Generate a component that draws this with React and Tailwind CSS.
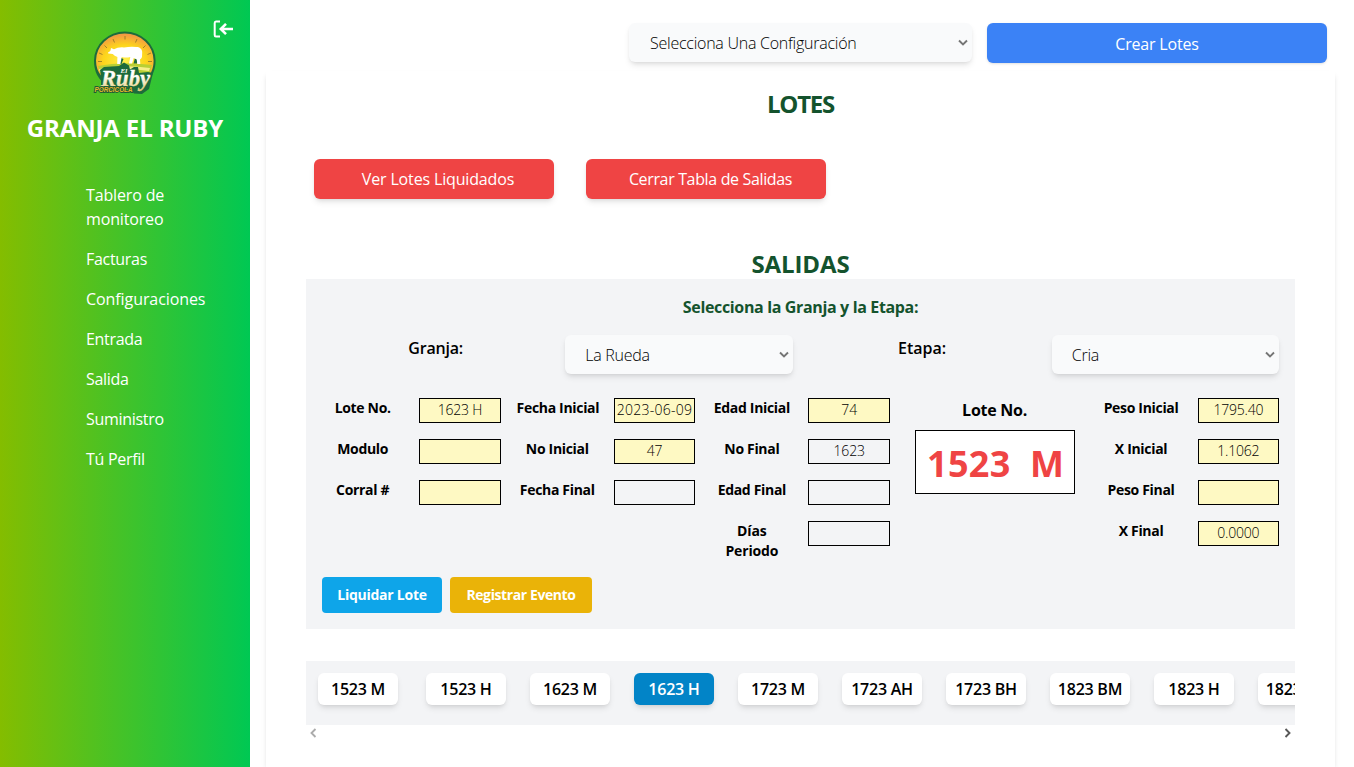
const links = ['Tablero de monitoreo', 'Facturas', 'Configuraciones', 'Entrada', 'Salida', 'Suministro', 'Tú Perfil'];

const columnA = [
  { label: 'Lote No.', value: '1623 H', fill: true },
  { label: 'Modulo', value: '', fill: true },
  { label: 'Corral #', value: '', fill: true },
];
const columnB = [
  { label: 'Fecha Inicial', value: '2023-06-09', fill: true },
  { label: 'No Inicial', value: '47', fill: true },
  { label: 'Fecha Final', value: '', fill: false },
];
const columnC = [
  { label: 'Edad Inicial', value: '74', fill: true },
  { label: 'No Final', value: '1623', fill: false },
  { label: 'Edad Final', value: '', fill: false },
  { label: 'Días Periodo', value: '', fill: false },
];
const columnD = [
  { label: 'Peso Inicial', value: '1795.40', fill: true },
  { label: 'X Inicial', value: '1.1062', fill: true },
  { label: 'Peso Final', value: '', fill: true },
  { label: 'X Final', value: '0.0000', fill: true },
];

const lots = ['1523 M', '1523 H', '1623 M', '1623 H', '1723 M', '1723 AH', '1723 BH', '1823 BM', '1823 H', '1823 AM'];

function Logo() {
  return (
    <svg viewBox="0 0 64 64" className="h-16 w-16">
      <defs>
        <radialGradient id="sun" cx="50%" cy="65%" r="62%">
          <stop offset="0" stopColor="#fff04a" />
          <stop offset="0.6" stopColor="#fdd51c" />
          <stop offset="1" stopColor="#f39a42" />
        </radialGradient>
        <linearGradient id="cream" x1="0" y1="0" x2="0" y2="1">
          <stop offset="0.4" stopColor="#ffffff" />
          <stop offset="1" stopColor="#e6cf7a" />
        </linearGradient>
      </defs>
      <path d="M1 29.500a30.800 29 0 0 1 61.600 0c0 9-3 15-7 20H8C4 45 1 39 1 29.500Z" fill="#1d6b3c" />
      <path d="M3 29.500a28.800 27 0 0 1 57.600 0c0 7-2 11-4 15H8C5 41 3 36 3 29.500Z" fill="url(#sun)" />
      <path d="M5 35q24-5 54-1l-3 9H8Z" fill="#b9cf35" />
      <path d="M6 38q23-5 51-1l-1 3q-24-4-49 1Z" fill="#f6ed8a" />
      <path d="M32 5v3.500M20 8l1.500 3.500M44 8l-1.500 3.500M11.500 14.500l2.500 2.500M52.500 14.500l-2.500 2.500M6 22l3.500 1.500M58 22l-3.500 1.500M5 30.500h4M59 30.500h-4" stroke="#8c7427" strokeWidth="0.800" />
      <path d="M28 27l-3 6h3.500l2-5M42 27l-1.500 5.500h3.500l1-5" fill="#1d6b3c" />
      <path d="M15 21.500q2-1 2.500-2l.5-2.500 3 1.200q4-2.300 10-1.800 6-.8 12-.4c4 0 6 2 6.200 5l-.2 5q-.6 1.500-2 2.500l.3 4.500h-3l-.6-4.500-3-1.500-1.700 5.500h-3l1.300-6.500q-4 1-8.600 0l-1.300 7h-3.200l.2-7q-3-1-4.700-3l-4.500-.5Z" fill="#fff" />
      <path d="M8 45l-1-6 4-3 15-1 5-3.500 5 3 1 4 4-2.500h4l1 6 9-1 5 1-4 16-7 5-8-.5-4-4.500H8Z" fill="#1d6b3c" />
      <text x="27.500" y="42" fontFamily="Liberation Serif, serif" fontSize="7" fontWeight="700" fontStyle="italic" fill="#fff">El</text>
      <text x="8" y="54.500" fontFamily="Liberation Serif, serif" fontSize="23" fontWeight="700" fontStyle="italic" textLength="49" lengthAdjust="spacingAndGlyphs" fill="url(#cream)" stroke="url(#cream)" strokeWidth="0.3">Ruby</text>
      <text x="1.500" y="61" fontFamily="Liberation Sans, sans-serif" fontSize="6.500" fontWeight="700" fontStyle="italic" textLength="38" lengthAdjust="spacingAndGlyphs" fill="#e9b82a" stroke="#1d5c35" strokeWidth="1.800" paintOrder="stroke">PORCICOLA</text>
    </svg>
  );
}

function Chevron({ className }) {
  return (
    <svg viewBox="0 0 10 8" className={className} fill="none" stroke="#757575" strokeWidth="1.900">
      <path d="M1 1.500 5 5.500 9 1.500" />
    </svg>
  );
}

function SelectBox({ text, className }) {
  return (
    <div className={`flex items-center justify-between rounded-md bg-gray-50 pr-1 font-light tracking-[-0.25px] shadow-md ${className}`}>
      <span>{text}</span>
      <Chevron className="h-2 w-[10px]" />
    </div>
  );
}

function Fields({ rows }) {
  return (
    <div className="flex flex-col gap-4">
      {rows.map((row) => (
        <div key={row.label} className="grid h-[25px] grid-cols-2 gap-4 text-center text-sm leading-5">
          <span className={`font-bold ${row.label === 'Días Periodo' ? 'tracking-[-0.15px]' : 'tracking-[-0.32px] whitespace-nowrap'}`}>{row.label}</span>
          <span className={`flex h-[25px] justify-center border border-black leading-[21px] font-light whitespace-nowrap ${row.value.length > 8 ? 'tracking-[0.25px]' : 'tracking-[-0.2px]'} ${row.fill ? 'bg-[#fef9c3]' : ''}`}>
            {row.value}
          </span>
        </div>
      ))}
    </div>
  );
}

export default function App() {
  return (
    <div className="flex h-[767px] w-full overflow-hidden bg-white font-['Open_Sans','Noto_Sans',sans-serif] text-base text-black">
      <aside className="flex w-[250px] shrink-0 flex-col bg-linear-to-r/srgb from-[#84bd00] to-[#00c853] text-white">
        <div className="flex h-[31px] justify-end pt-5 pr-4">
          <svg viewBox="0 0 22 18" className="h-[18px] w-[22px]" fill="none" stroke="#fff" strokeWidth="2.600">
            <path d="M8 1.500H4Q2.700 1.500 2.700 3V15Q2.700 16.500 4 16.500H8" strokeWidth="2" />
            <path d="M21 9H9M14 3.800 8.800 9l5.200 5.200" />
          </svg>
        </div>
        <div className="flex h-16 justify-center">
          <Logo />
        </div>
        <h1 className="mt-[17px] text-center text-2xl leading-8 font-bold tracking-[-0.15px] whitespace-nowrap">GRANJA EL RUBY</h1>
        <nav className="mt-[39px] ml-[86px] flex w-[130px] flex-col gap-4 font-medium">
          {links.map((link) => (
            <a key={link} className={link.length > 16 ? 'w-[100px] tracking-[-0.15px]' : link.length > 12 ? 'tracking-[-0.08px]' : 'tracking-[-0.3px]'}>{link}</a>
          ))}
        </nav>
      </aside>

      <main className="flex min-w-0 grow flex-col">
        <div className="flex shrink-0 justify-end gap-[15px] pt-[23px] pr-[27px]">
          <SelectBox text="Selecciona Una Configuración" className="h-[39px] w-[343px] pt-px pl-[21px]" />
          <button className="h-10 w-[340px] rounded-md bg-[#3b82f6] pt-px font-medium tracking-[-0.2px] text-white shadow-sm">Crear Lotes</button>
        </div>

        <section className="mt-2 mr-[19px] ml-4 flex grow flex-col px-10 pt-[17px] shadow-[0_4px_6px_-1px_rgba(0,0,0,0.1),0_2px_4px_-2px_rgba(0,0,0,0.1)]">
          <h2 className="text-center text-2xl leading-8 font-bold tracking-[-1.2px] text-[#14532d]">LOTES</h2>
          <div className="mt-[39px] ml-2 flex gap-8">
            <button className="h-10 w-60 rounded-md bg-[#ef4444] pl-2 font-medium tracking-[-0.15px] text-white shadow-md">Ver Lotes Liquidados</button>
            <button className="h-10 w-60 rounded-md bg-[#ef4444] pl-[9px] font-medium tracking-[-0.35px] text-white shadow-md">Cerrar Tabla de Salidas</button>
          </div>
          <h2 className="mt-[49px] text-center text-2xl leading-8 font-bold tracking-[-0.1px] text-[#14532d]">SALIDAS</h2>

          <div className="mt-[-1px] h-[350px] bg-gray-100 px-4 pt-4">
            <h3 className="text-center leading-6 font-bold tracking-[-0.35px] text-[#14532d]">Selecciona la Granja y la Etapa:</h3>
            <div className="mt-4 grid h-[39px] grid-cols-4 gap-4">
              <span className="pt-px text-center font-semibold tracking-[-0.2px]">Granja:</span>
              <SelectBox text="La Rueda" className="h-[39px] pt-px pl-5" />
              <span className="pt-px text-center font-semibold">Etapa:</span>
              <SelectBox text="Cria" className="h-[39px] pt-px pl-5" />
            </div>
            <div className="mt-6 grid h-[163px] grid-cols-5 gap-4">
              <Fields rows={columnA} />
              <Fields rows={columnB} />
              <Fields rows={columnC} />
              <div className="flex flex-col items-center pr-px">
                <span className="h-8 leading-6 font-bold tracking-[-0.25px]">Lote No.</span>
                <div className="flex h-16 w-40 items-center justify-center border border-black bg-white pt-1 pl-[2px] text-4xl font-bold tracking-[0.3px] whitespace-pre text-[#ef4444]">{'1523  M'}</div>
              </div>
              <Fields rows={columnD} />
            </div>
            <div className="mt-4 flex gap-2 text-sm font-bold text-white">
              <button className="h-9 w-[120px] rounded-sm bg-[#0ea5e9] tracking-[-0.25px]">Liquidar Lote</button>
              <button className="h-9 w-[142px] rounded-sm bg-[#eab308] tracking-[-0.4px]">Registrar Evento</button>
            </div>
          </div>

          <div className="mt-8 flex h-16 shrink-0 gap-6 overflow-hidden bg-gray-100 px-3 pt-3">
            {lots.map((lot) => (
              <button key={lot} className={`h-8 w-20 shrink-0 rounded-md font-semibold tracking-[-0.25px] whitespace-nowrap shadow-md first:mr-1 ${lot === '1623 H' ? 'bg-[#0284c7] text-white' : 'bg-white'}`}>
                {lot}
              </button>
            ))}
          </div>
          <div className="flex justify-between px-[2px] pt-1">
            <Chevron className="h-2 w-[10px] rotate-90 opacity-60" />
            <Chevron className="h-2 w-[10px] -rotate-90 brightness-75" />
          </div>
        </section>
      </main>
    </div>
  );
}
